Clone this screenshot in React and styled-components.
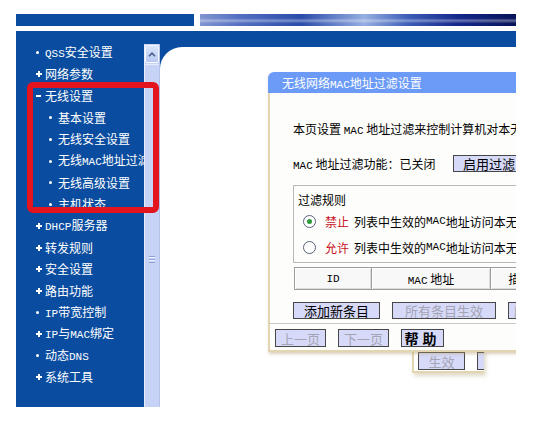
import React from "react";
import styled, { createGlobalStyle } from "styled-components";

const GlobalStyle = createGlobalStyle`
  html, body {
    margin: 0;
    padding: 0;
    background: #fff;
  }
  body {
    font-family: "Noto Sans CJK SC", "Liberation Sans", sans-serif;
    font-size: 12px;
    color: #000;
  }
`;

const BLUE = "#0a4da0";
const TAN = "#e2d6b2";

const Page = styled.div`
  width: 536px;
  height: 432px;
  overflow: hidden;
  box-sizing: border-box;
  padding: 14px 20px 0 16px;
`;

const TopStrip = styled.div`
  display: flex;
  gap: 6px;
  height: 12px;
`;

const TopBlock = styled.div`
  width: 178px;
  background: ${BLUE};
`;

const Banner = styled.div`
  flex: 1;
  background:
    linear-gradient(180deg, transparent 35%, rgba(255, 255, 255, 0.35) 55%, transparent 80%),
    linear-gradient(90deg, #8196d0 0%, #5570c2 12%, #2a4ba9 32%, #96aee2 52%, #3c5cb6 66%, #13268a 82%, #071358 100%);
`;

const Frame = styled.div`
  position: relative;
  margin-top: 5px;
  display: grid;
  grid-template-columns: 128px 16px minmax(0, 1fr);
  height: 376px;
`;

const Sidebar = styled.nav`
  background: ${BLUE};
  padding-top: 11px;
  overflow: hidden;
`;

const MenuRow = styled.div`
  display: flex;
  align-items: center;
  height: 21.65px;
  padding-left: ${(p) => (p.$level === 2 ? 32 : 19)}px;
  color: #fff;
  white-space: nowrap;
  line-height: 1;
`;

const Marker = styled.span`
  width: 10px;
  height: 8px;
  flex: none;
  display: flex;
  align-items: center;
  &::before {
    content: "";
    display: block;
    margin-left: 1px;
    background: #fff;
    ${(p) =>
      p.$kind === "dot"
        ? "width: 3px; height: 3px; border-radius: 50%;"
        : p.$kind === "minus"
        ? "width: 5px; height: 2px;"
        : `width: 6px; height: 6px; background:
             linear-gradient(#fff, #fff) center / 6px 2px no-repeat,
             linear-gradient(#fff, #fff) center / 2px 6px no-repeat;`}
  }
`;

const Mono = styled.span`
  font-family: "Liberation Mono", "DejaVu Sans Mono", monospace;
  font-size: 11px;
`;

const ScrollColumn = styled.div`
  background: ${BLUE};
  display: flex;
  flex-direction: column;
  padding-top: 13px;
`;

const ScrollTrack = styled.div`
  flex: 1;
  display: flex;
  flex-direction: column;
  background: #c9d5f5;
  border-left: 1px solid #e9eefc;
  border-right: 1px solid #b3c2ea;
`;

const UpButton = styled.div`
  height: 16px;
  margin: 1px 0;
  display: flex;
  align-items: center;
  justify-content: center;
  background: linear-gradient(180deg, #dbe5fd, #b8c9f2);
  border: 1px solid #f4f7ff;
  border-radius: 2px;
`;

const Thumb = styled.div`
  flex: 1;
  display: flex;
  flex-direction: column;
  align-items: center;
  background: #c6d3f6;
  border-top: 1px solid #e6ecfd;
`;

const Grip = styled.div`
  margin-top: ${(p) => p.$top}px;
  width: 6px;
  height: 7px;
  background: repeating-linear-gradient(180deg, #8fa2d3 0 1px, #eef2fd 1px 2px, transparent 2px 3px);
`;

const ContentColumn = styled.div`
  min-width: 0;
  background: ${BLUE};
  display: flex;
  flex-direction: column;
  padding-top: 16px;
`;

const ContentArea = styled.main`
  position: relative;
  flex: 1;
  min-width: 0;
  background: #fff;
  border-top-left-radius: 22px;
  overflow: hidden;
  padding: 25px 0 0 108px;
`;

const Highlight = styled.div`
  position: absolute;
  left: 11px;
  top: 51px;
  width: 132px;
  height: 131px;
  box-sizing: border-box;
  border: 6px solid #e3141d;
  border-radius: 6px;
  z-index: 2;
`;

const Panel = styled.section`
  position: relative;
  z-index: 1;
  width: 292px;
  display: flex;
  flex-direction: column;
  box-shadow: 1px 2px 3px rgba(170, 150, 100, 0.45);
`;

const TitleBar = styled.div`
  height: 21px;
  line-height: 21px;
  padding-left: 14px;
  background: #6b9bf7;
  color: #fff;
  border-top-left-radius: 6px;
  white-space: nowrap;
`;

const PanelBody = styled.div`
  display: flex;
  flex-direction: column;
  align-items: flex-start;
  padding-left: 23px;
  background: #fdfdfb;
  border-left: 2px solid ${TAN};
  white-space: nowrap;
`;

const Intro = styled.p`
  margin: 28px 0 0;
  line-height: 16px;
`;

const StatusRow = styled.div`
  margin-top: 16px;
  display: flex;
  align-items: center;
  height: 17px;
`;

const StatusLabel = styled.span`
  width: 160px;
`;

const Button = styled.button`
  flex: none;
  width: ${(p) => p.$w}px;
  height: ${(p) => p.$h || 17}px;
  padding: 0;
  font-family: inherit;
  font-size: ${(p) => (p.$big ? 14 : 13)}px;
  font-weight: ${(p) => (p.$big ? 700 : 400)};
  letter-spacing: ${(p) => (p.$big ? 4 : 0)}px;
  line-height: 1;
  color: ${(p) => (p.$muted ? "#a4a4b4" : "#000")};
  background: #d6daf8;
  border: 1px solid #474747;
  text-align: center;
  white-space: nowrap;
  overflow: hidden;
`;

const RuleBox = styled.div`
  margin-top: 13px;
  width: 262px;
  box-sizing: border-box;
  padding: 5px 0 2px 0;
  border: 1px solid #b9b9b9;
`;

const RuleTitle = styled.div`
  height: 17px;
  line-height: 17px;
  padding-left: 4px;
`;

const RadioRow = styled.label`
  display: flex;
  align-items: center;
  height: 26px;
  padding-left: 9px;
`;

const Radio = styled.span`
  width: 11px;
  height: 11px;
  flex: none;
  border-radius: 50%;
  border: 1px solid #56627a;
  background: #fff;
  display: flex;
  align-items: center;
  justify-content: center;
  margin-right: 9px;
  &::after {
    content: "";
    width: 5px;
    height: 5px;
    border-radius: 50%;
    background: ${(p) => (p.$on ? "#2f9a3a" : "transparent")};
  }
`;

const Verb = styled.span`
  color: #c8121b;
  width: 29px;
`;

const HeaderTable = styled.div`
  margin-top: 4px;
  margin-left: 1px;
  display: grid;
  grid-template-columns: 77px 119px 60px;
  height: 23px;
  border-top: 1px solid #9d9d9d;
  border-left: 1px solid #9d9d9d;
  box-sizing: border-box;
`;

const HeadCell = styled.div`
  display: flex;
  align-items: center;
  justify-content: center;
  background: #f8f8f8;
  border-right: 1px solid #9d9d9d;
  border-bottom: 1px solid #9d9d9d;
  box-shadow: inset 1px 1px 0 #fff, inset -1px -1px 0 #dcdcdc;
`;

const ButtonRow = styled.div`
  margin: 12px 0 4px;
  display: flex;
  gap: ${(p) => p.$gap}px;
`;

const Footer = styled.div`
  display: flex;
  gap: 12px;
  height: 29px;
  padding: 5px 0 0 5px;
  box-sizing: border-box;
  background: #fdfdfb;
  border-top: 1px solid #cacaca;
  border-left: 2px solid ${TAN};
  border-bottom: 2px solid ${TAN};
`;

const UnderPopup = styled.div`
  position: absolute;
  left: 252px;
  top: 302px;
  width: 72px;
  height: 24px;
  display: flex;
  gap: 12px;
  padding: 3px 0 0 4px;
  box-sizing: border-box;
  overflow: hidden;
  background: #fff;
  border-left: 2px solid ${TAN};
  border-bottom: 2px solid ${TAN};
  box-shadow: 2px 3px 4px rgba(170, 150, 100, 0.35);
`;

const menu = [
  { label: "QSS安全设置", kind: "dot", level: 1 },
  { label: "网络参数", kind: "plus", level: 1 },
  { label: "无线设置", kind: "minus", level: 1 },
  { label: "基本设置", kind: "dot", level: 2 },
  { label: "无线安全设置", kind: "dot", level: 2 },
  { label: "无线MAC地址过滤", kind: "dot", level: 2 },
  { label: "无线高级设置", kind: "dot", level: 2 },
  { label: "主机状态", kind: "dot", level: 2 },
  { label: "DHCP服务器", kind: "plus", level: 1 },
  { label: "转发规则", kind: "plus", level: 1 },
  { label: "安全设置", kind: "plus", level: 1 },
  { label: "路由功能", kind: "plus", level: 1 },
  { label: "IP带宽控制", kind: "dot", level: 1 },
  { label: "IP与MAC绑定", kind: "plus", level: 1 },
  { label: "动态DNS", kind: "dot", level: 1 },
  { label: "系统工具", kind: "plus", level: 1 },
];

// latin runs are drawn narrower, like the old bitmap font
const mixed = (text) =>
  text.split(/([A-Za-z]+)/).map((part, i) =>
    /^[A-Za-z]+$/.test(part) ? <Mono key={i}>{part}</Mono> : part
  );

const App = () => {
  return (
    <Page>
      <GlobalStyle />
      <TopStrip>
        <TopBlock />
        <Banner />
      </TopStrip>

      <Frame>
        <Sidebar>
          {menu.map((item) => (
            <MenuRow key={item.label} $level={item.level}>
              <Marker $kind={item.kind} />
              <span>{mixed(item.label)}</span>
            </MenuRow>
          ))}
        </Sidebar>

        <ScrollColumn>
          <ScrollTrack>
            <UpButton>
              <svg width="8" height="5" viewBox="0 0 8 5">
                <path d="M1 4.2 L4 1.2 L7 4.2" stroke="#4a5c8a" strokeWidth="1.6" fill="none" />
              </svg>
            </UpButton>
            <Thumb>
              <Grip $top={191} />
            </Thumb>
          </ScrollTrack>
        </ScrollColumn>

        <ContentColumn>
          <ContentArea>
            <Panel>
              <TitleBar>{mixed("无线网络MAC地址过滤设置")}</TitleBar>
              <PanelBody>
                <Intro>
                  本页设置 <Mono>MAC</Mono> 地址过滤来控制计算机对本无线网络的访问。
                </Intro>
                <StatusRow>
                  <StatusLabel>
                    <Mono>MAC</Mono> 地址过滤功能：已关闭
                  </StatusLabel>
                  <Button $w={72}>启用过滤</Button>
                </StatusRow>
                <RuleBox>
                  <RuleTitle>过滤规则</RuleTitle>
                  <RadioRow>
                    <Radio $on />
                    <Verb>禁止</Verb>
                    列表中生效的<Mono>MAC</Mono>地址访问本无线网络
                  </RadioRow>
                  <RadioRow>
                    <Radio />
                    <Verb>允许</Verb>
                    列表中生效的<Mono>MAC</Mono>地址访问本无线网络
                  </RadioRow>
                </RuleBox>
                <HeaderTable>
                  <HeadCell>
                    <Mono>ID</Mono>
                  </HeadCell>
                  <HeadCell>
                    <span>
                      <Mono>MAC</Mono> 地址
                    </span>
                  </HeadCell>
                  <HeadCell>描述</HeadCell>
                </HeaderTable>
                <ButtonRow $gap={12}>
                  <Button $w={87}>添加新条目</Button>
                  <Button $w={104} $muted>
                    所有条目生效
                  </Button>
                  <Button $w={90} $muted>
                    所有条目失效
                  </Button>
                </ButtonRow>
              </PanelBody>
              <Footer>
                <Button $w={51} $h={18} $muted>
                  上一页
                </Button>
                <Button $w={51} $h={18} $muted>
                  下一页
                </Button>
                <Button $w={43} $h={18} $big>
                  帮助
                </Button>
              </Footer>
            </Panel>
            <UnderPopup>
              <Button $w={47} $h={18} $muted>
                生效
              </Button>
              <Button $w={40} $h={18} $muted>
                取消
              </Button>
            </UnderPopup>
          </ContentArea>
        </ContentColumn>

        <Highlight />
      </Frame>
    </Page>
  );
};

export default App;
